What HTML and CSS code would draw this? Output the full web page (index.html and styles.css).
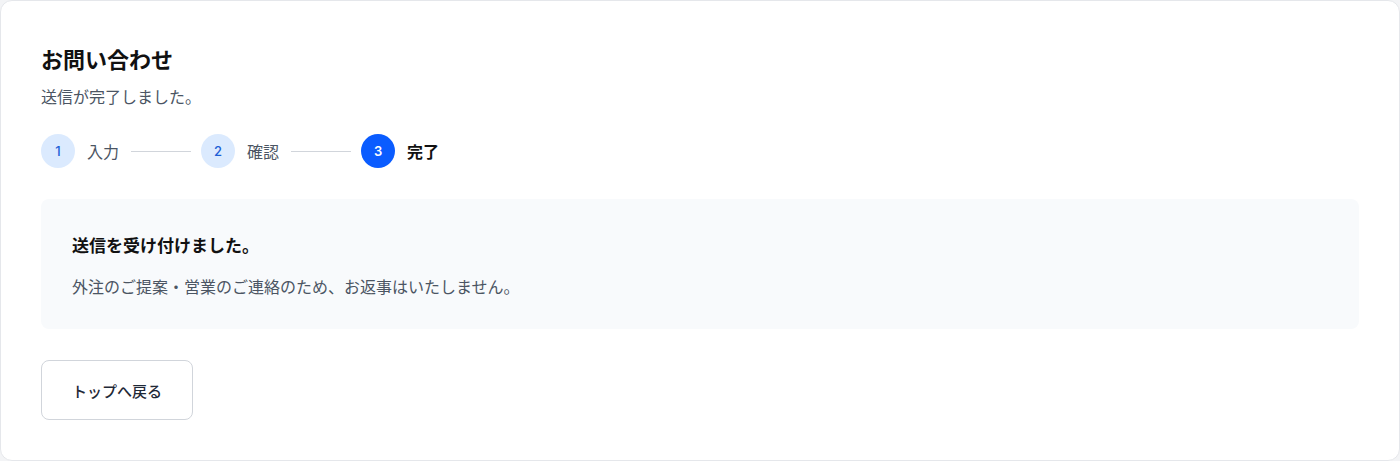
FILE: index.html
```html
<!DOCTYPE html>
<html lang="ja">
<head>
<meta charset="utf-8">
<title>お問い合わせ</title>
<link rel="stylesheet" href="styles.css">
</head>
<body>
<main class="card">
  <h1 class="title">お問い合わせ</h1>
  <p class="subtitle">送信が完了しました。</p>
  <ol class="steps">
    <li class="step done"><span class="step-num">1</span><span class="step-label">入力</span></li>
    <li class="step-line" aria-hidden="true"></li>
    <li class="step done"><span class="step-num">2</span><span class="step-label">確認</span></li>
    <li class="step-line" aria-hidden="true"></li>
    <li class="step current"><span class="step-num">3</span><span class="step-label">完了</span></li>
  </ol>
  <section class="notice">
    <h2 class="notice-title">送信を受け付けました。</h2>
    <p class="notice-text">外注のご提案・営業のご連絡のため、お返事はいたしません。</p>
  </section>
  <a class="back-btn" href="#">トップへ戻る</a>
</main>
</body>
</html>
```

FILE: styles.css
```css
* { box-sizing: border-box; }
html, body { margin: 0; padding: 0; }
body {
  background: #f3f4f6;
  font-family: "Noto Sans CJK JP", "Noto Sans", sans-serif;
  color: #111827;
}
.card {
  display: flex;
  flex-direction: column;
  align-items: flex-start;
  width: 1400px;
  height: 461px;
  background: #ffffff;
  border: 1px solid #e5e7eb;
  border-radius: 12px;
  padding: 41px 40px 40px 40px;
}
.title {
  margin: 0;
  font-size: 22px;
  line-height: 32px;
  font-weight: 700;
  color: #111111;
}
.subtitle {
  margin: 10px 0 0;
  font-size: 16px;
  line-height: 24px;
  color: #4b5563;
}
.steps {
  list-style: none;
  margin: 26px 0 0;
  padding: 0;
  display: flex;
  align-items: center;
  gap: 10px;
}
.step {
  display: flex;
  align-items: center;
  gap: 12px;
}
.step-num {
  display: flex;
  align-items: center;
  justify-content: center;
  width: 34px;
  height: 34px;
  border-radius: 50%;
  background: #dbeafe;
  color: #1d5fd6;
  font-family: "Inter", "Noto Sans", sans-serif;
  font-size: 13px;
  font-weight: 500;
}
.step-label {
  font-size: 16px;
  line-height: 24px;
  color: #4b5563;
}
.step.current .step-num {
  background: #0a5cff;
  color: #ffffff;
  font-weight: 600;
}
.step.current .step-label {
  color: #111111;
  font-weight: 700;
}
.step-line {
  width: 60px;
  height: 1px;
  background: #d1d5db;
  margin-left: 2px;
}
.notice {
  align-self: stretch;
  margin-top: 31px;
  background: #f8fafc;
  border-radius: 8px;
  padding: 32px 31px 30px;
}
.notice-title {
  margin: 0;
  font-size: 17px;
  line-height: 28px;
  font-weight: 700;
  color: #111111;
}
.notice-text {
  margin: 14px 0 0;
  font-size: 16px;
  line-height: 26px;
  color: #4b5563;
}
.back-btn {
  margin-top: 31px;
  display: inline-flex;
  align-items: center;
  justify-content: center;
  height: 60px;
  padding: 0 30px;
  border: 1px solid #d1d5db;
  border-radius: 8px;
  background: #ffffff;
  color: #1f2937;
  font-size: 15px;
  font-weight: 500;
  text-decoration: none;
}
```
